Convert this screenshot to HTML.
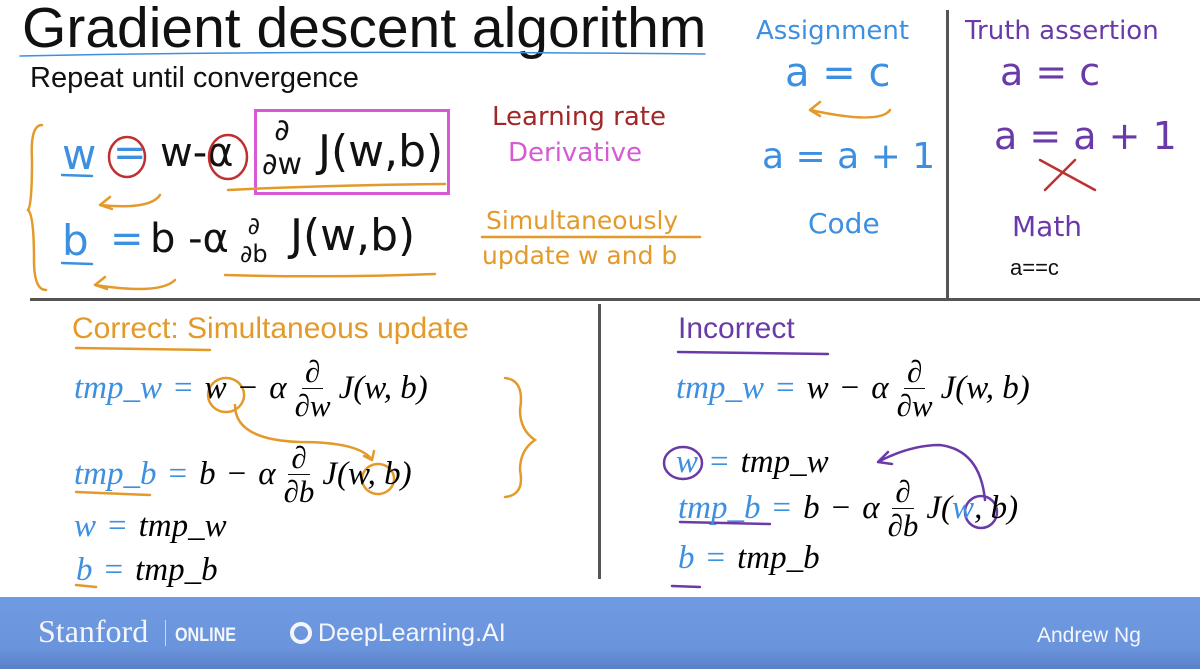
<!DOCTYPE html>
<html><head><meta charset="utf-8"><style>
body{margin:0;width:1200px;height:669px;background:#fff;position:relative;overflow:hidden;font-family:"Liberation Sans",sans-serif}
.a{position:absolute;white-space:nowrap}
.hw{font-family:"DejaVu Sans","Liberation Sans",sans-serif}
.m{font-family:"Liberation Serif",serif;font-style:italic;font-size:33px;display:flex;align-items:center;gap:0}
.m .n{font-style:normal}
.g{display:inline-block;width:12px}
.f{display:inline-flex;flex-direction:column;align-items:center;font-size:31px;line-height:33px;margin:0 8px}
.f span:first-child{border-bottom:1.5px solid #111;padding:0 3px}
.bl{color:#3d8fe0}.or{color:#e39a2b}.pu{color:#6a3aa8}
</style></head><body>
<div class="a" style="left:22px;top:-5px;font-size:57px;color:#111">Gradient descent algorithm</div>
<div class="a" style="left:30px;top:62px;font-size:29px;color:#111">Repeat until convergence</div>
<div class="a hw" style="left:756px;top:16px;font-size:26px;color:#3d8fe0">Assignment</div>
<div class="a hw" style="left:965px;top:16px;font-size:26px;color:#6a3aa8">Truth assertion</div>
<div class="a" style="left:946px;top:10px;width:3px;height:288px;background:#555"></div>
<div class="a" style="left:30px;top:298px;width:1170px;height:3px;background:#555"></div>
<div class="a" style="left:598px;top:304px;width:3px;height:275px;background:#555"></div>

<div class="a hw bl" style="left:785px;top:50px;font-size:40px">a = c</div>
<div class="a hw bl" style="left:762px;top:136px;font-size:36px">a = a + 1</div>
<div class="a hw bl" style="left:808px;top:207px;font-size:28px">Code</div>
<div class="a hw pu" style="left:1000px;top:50px;font-size:38px">a = c</div>
<div class="a hw pu" style="left:994px;top:114px;font-size:38px">a = a + 1</div>
<div class="a hw pu" style="left:1012px;top:210px;font-size:28px">Math</div>
<div class="a" style="left:1010px;top:255px;font-size:22px;color:#111">a==c</div>

<div class="a hw" style="left:492px;top:102px;font-size:26px;color:#a02828">Learning rate</div>
<div class="a hw" style="left:508px;top:138px;font-size:26px;color:#d65ad6">Derivative</div>
<div class="a hw or" style="left:486px;top:206px;font-size:25px">Simultaneously</div>
<div class="a hw or" style="left:482px;top:241px;font-size:25px">update w and b</div>

<div class="a hw" style="left:62px;top:130px;font-size:42px"><span class="bl">w</span></div>
<div class="a hw bl" style="left:113px;top:130px;font-size:40px">=</div>
<div class="a hw" style="left:160px;top:130px;font-size:40px;color:#111">w-α</div>
<div class="a" style="left:254px;top:109px;width:190px;height:80px;border:3px solid #d65ad6"></div>
<div class="a hw" style="left:262px;top:114px;font-size:30px;color:#111;line-height:34px;text-align:center">∂<br>∂w</div>
<div class="a hw" style="left:318px;top:126px;font-size:44px;color:#111">J(w,b)</div>
<div class="a hw" style="left:62px;top:216px;font-size:42px"><span class="bl">b</span></div>
<div class="a hw bl" style="left:110px;top:216px;font-size:40px">=</div>
<div class="a hw" style="left:150px;top:216px;font-size:40px;color:#111">b -α</div>
<div class="a hw" style="left:240px;top:212px;font-size:24px;color:#111;line-height:28px;text-align:center">∂<br>∂b</div>
<div class="a hw" style="left:290px;top:210px;font-size:44px;color:#111">J(w,b)</div>

<svg class="a" style="left:0;top:0" width="1200" height="600" fill="none" stroke-linecap="round">
<path d="M20 56 Q300 50 705 54" stroke="#3d8fe0" stroke-width="1.5"/>
<g stroke="#e39a2b" stroke-width="2.5">
<path d="M42 125 Q30 125 32 160 Q32 205 28 210 Q34 215 34 260 Q34 290 46 290"/>
<path d="M160 195 Q150 210 100 205 M100 205 l10 -8 M100 205 l12 4"/>
<path d="M175 280 Q160 295 95 285 M95 285 l10 -8 M95 285 l12 4"/>
<path d="M228 190 Q330 185 445 184"/>
<path d="M225 275 Q330 278 435 274"/>
<path d="M482 237 L700 237"/>
<path d="M890 110 Q880 125 810 110 M810 110 l10 -8 M810 110 l10 6"/>
<path d="M76 348 L210 350"/>
<path d="M235 405 Q235 440 300 442 Q360 442 372 460 M372 460 l-8 -4 M372 460 l2 -9"/>
<path d="M226 378 a18 17 0 1 0 0.1 0"/>
<path d="M378 464 a16 15 0 1 0 0.1 0"/>
<path d="M505 378 Q525 380 520 410 Q520 430 535 440 Q520 450 520 470 Q525 495 505 497"/>
<path d="M76 492 L150 495"/>
<path d="M76 585 L96 587"/>
</g>
<g stroke="#3d8fe0" stroke-width="2.5"><path d="M62 175 L92 176 M62 263 L92 264"/></g>
<g stroke="#c03030" stroke-width="2.5"><ellipse cx="127" cy="157" rx="18" ry="20"/><ellipse cx="228" cy="157" rx="19" ry="22"/><path d="M1040 160 L1095 190 M1075 160 L1045 190"/></g>
<g stroke="#6a3aa8" stroke-width="2.5"><path d="M678 352 L828 354 M680 522 L770 524 M672 586 L700 587"/>
<ellipse cx="683" cy="463" rx="19" ry="16"/><ellipse cx="981" cy="512" rx="16" ry="16"/>
<path d="M985 500 Q980 450 940 445 Q910 445 878 462 M878 462 l10 -10 M878 462 l14 2"/></g>
</svg>

<div class="a" style="left:72px;top:312px;font-size:30px;color:#e39a2b">Correct: Simultaneous update</div>
<div class="a" style="left:678px;top:312px;font-size:30px;color:#6a3aa8">Incorrect</div>

<div class="a m" style="left:74px;top:355px"><span class="bl">tmp_w</span><span class="g"></span><span class="bl n">=</span><span class="g"></span>w<span class="g"></span><span class="n">−</span><span class="g"></span>α<span class="f"><span>∂</span><span>∂w</span></span>J(w, b)</div>
<div class="a m" style="left:74px;top:441px"><span class="bl">tmp_b</span><span class="g"></span><span class="bl n">=</span><span class="g"></span>b<span class="g"></span><span class="n">−</span><span class="g"></span>α<span class="f"><span>∂</span><span>∂b</span></span>J(w, b)</div>
<div class="a m" style="left:74px;top:508px"><span class="bl">w</span><span class="g"></span><span class="bl n">=</span><span class="g"></span>tmp_w</div>
<div class="a m" style="left:76px;top:552px"><span class="bl">b</span><span class="g"></span><span class="bl n">=</span><span class="g"></span>tmp_b</div>

<div class="a m" style="left:676px;top:355px"><span class="bl">tmp_w</span><span class="g"></span><span class="bl n">=</span><span class="g"></span>w<span class="g"></span><span class="n">−</span><span class="g"></span>α<span class="f"><span>∂</span><span>∂w</span></span>J(w, b)</div>
<div class="a m" style="left:676px;top:444px"><span class="bl">w</span><span class="g"></span><span class="bl n">=</span><span class="g"></span>tmp_w</div>
<div class="a m" style="left:678px;top:475px"><span class="bl">tmp_b</span><span class="g"></span><span class="bl n">=</span><span class="g"></span>b<span class="g"></span><span class="n">−</span><span class="g"></span>α<span class="f"><span>∂</span><span>∂b</span></span>J(<span class="bl">w</span>, b)</div>
<div class="a m" style="left:678px;top:540px"><span class="bl">b</span><span class="g"></span><span class="bl n">=</span><span class="g"></span>tmp_b</div>

<div class="a" style="left:0;top:597px;width:1200px;height:72px;background:linear-gradient(#6f9be2,#6a94dc 70%,#5a80c8)"></div>
<div class="a" style="left:38px;top:613px;font-family:'Liberation Serif',serif;font-size:32px;color:#f4f6fb">Stanford</div>
<div class="a" style="left:165px;top:620px;width:1px;height:26px;background:#c8d6f2"></div>
<div class="a" style="left:175px;top:625px;font-size:19px;font-weight:bold;color:#f4f6fb;transform:scaleX(.85);transform-origin:left">ONLINE</div>
<div class="a" style="left:290px;top:622px;width:22px;height:22px;border-radius:50%;border:4px solid #f4f6fb;box-sizing:border-box"></div>
<div class="a" style="left:318px;top:619px;font-size:25px;color:#f4f6fb">DeepLearning.AI</div>
<div class="a" style="left:1037px;top:624px;font-size:21px;color:#f4f6fb">Andrew Ng</div>
</body></html>
